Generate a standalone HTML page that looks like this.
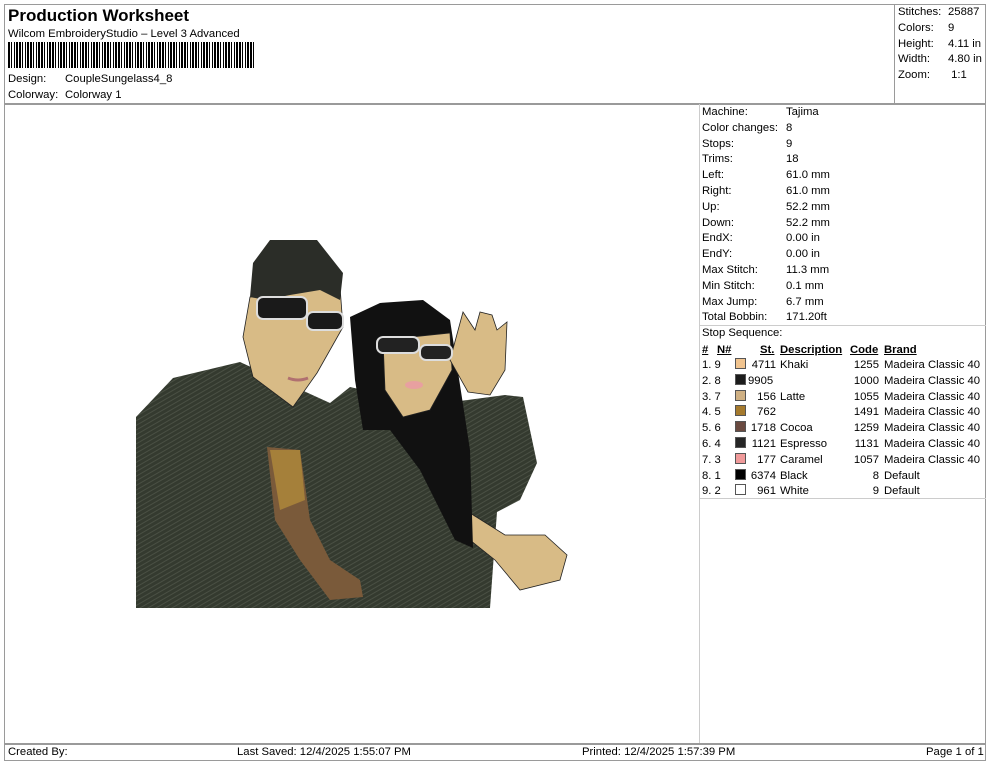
<!DOCTYPE html>
<html><head><meta charset="utf-8"><style>
body{margin:0;width:990px;height:762px;background:#fff;font-family:"Liberation Sans",Arial,sans-serif;font-size:11.3px;color:#000;position:relative;overflow:hidden}
.a{position:absolute;white-space:nowrap;line-height:13px}
.ln{position:absolute;background:#9a9a9a}
.sw{display:inline-block;width:9px;height:9px;border:1px solid #555;vertical-align:-1px}
</style></head><body>
<div class="ln" style="left:4px;top:4px;width:982px;height:1px"></div>
<div class="ln" style="left:4px;top:4px;width:1px;height:757px"></div>
<div class="ln" style="left:985px;top:4px;width:1px;height:757px"></div>
<div class="ln" style="left:4px;top:103px;width:982px;height:2px"></div>
<div class="ln" style="left:894px;top:4px;width:1px;height:100px"></div>
<div class="ln" style="left:699px;top:104px;width:1px;height:640px;background:#ccc"></div>
<div class="ln" style="left:699px;top:325px;width:287px;height:1px;background:#ccc"></div>
<div class="ln" style="left:699px;top:498px;width:287px;height:1px;background:#ccc"></div>
<div class="ln" style="left:4px;top:743px;width:982px;height:2px"></div>
<div class="ln" style="left:4px;top:760px;width:982px;height:1px"></div>

<div class="a" style="left:8px;top:6px;font-size:17px;font-weight:bold;line-height:20px">Production Worksheet</div>
<div class="a" style="left:8px;top:28px">Wilcom EmbroideryStudio – Level 3 Advanced</div>
<div style="position:absolute;left:8px;top:42px;width:248px;height:26px;background:repeating-linear-gradient(90deg,#000 0 2px,#fff 2px 3px,#000 3px 4px,#fff 4px 6px,#000 6px 7px,#fff 7px 8px,#000 8px 10px,#fff 10px 11px)"></div>
<div class="a" style="left:8px;top:73px">Design:</div><div class="a" style="left:65px;top:73px">CoupleSungelass4_8</div>
<div class="a" style="left:8px;top:89px">Colorway:</div><div class="a" style="left:65px;top:89px">Colorway 1</div>

<div class="a" style="left:898px;top:5px;line-height:15.8px">Stitches:<br>Colors:<br>Height:<br>Width:<br>Zoom:</div>
<div class="a" style="left:948px;top:5px;line-height:15.8px">25887<br>9<br>4.11 in<br>4.80 in<br>&nbsp;1:1</div>

<div class="a" style="left:702px;top:105px;line-height:15.8px">Machine:<br>Color changes:<br>Stops:<br>Trims:<br>Left:<br>Right:<br>Up:<br>Down:<br>EndX:<br>EndY:<br>Max Stitch:<br>Min Stitch:<br>Max Jump:<br>Total Bobbin:<br>Stop Sequence:</div>
<div class="a" style="left:786px;top:105px;line-height:15.8px">Tajima<br>8<br>9<br>18<br>61.0 mm<br>61.0 mm<br>52.2 mm<br>52.2 mm<br>0.00 in<br>0.00 in<br>11.3 mm<br>0.1 mm<br>6.7 mm<br>171.20ft</div>

<div class="a" style="left:702px;top:343px;line-height:15.8px;font-weight:bold;text-decoration:underline">#</div>
<div class="a" style="left:717px;top:343px;line-height:15.8px;font-weight:bold;text-decoration:underline">N#</div>
<div class="a" style="left:760px;top:343px;line-height:15.8px;font-weight:bold;text-decoration:underline">St.</div>
<div class="a" style="left:780px;top:343px;line-height:15.8px;font-weight:bold;text-decoration:underline">Description</div>
<div class="a" style="left:850px;top:343px;line-height:15.8px;font-weight:bold;text-decoration:underline">Code</div>
<div class="a" style="left:884px;top:343px;line-height:15.8px;font-weight:bold;text-decoration:underline">Brand</div>
<div class="a" style="left:702px;top:358px;line-height:15.8px">1. 9<br>2. 8<br>3. 7<br>4. 5<br>5. 6<br>6. 4<br>7. 3<br>8. 1<br>9. 2</div>
<div class="a" style="left:735px;top:358px;line-height:15.8px">
<span class="sw" style="background:#f1c48f"></span><br><span class="sw" style="background:#1c1c1c"></span><br><span class="sw" style="background:#cfb083"></span><br><span class="sw" style="background:#a57a2d"></span><br><span class="sw" style="background:#6a4a40"></span><br><span class="sw" style="background:#262626"></span><br><span class="sw" style="background:#f09a9a"></span><br><span class="sw" style="background:#000"></span><br><span class="sw" style="background:#fff"></span></div>
<div class="a" style="left:748px;top:358px;line-height:15.8px;width:28px;text-align:right">4711<br>9905&nbsp;<br>156<br>762<br>1718<br>1121<br>177<br>6374<br>961</div>
<div class="a" style="left:780px;top:358px;line-height:15.8px">Khaki<br>&nbsp;<br>Latte<br>&nbsp;<br>Cocoa<br>Espresso<br>Caramel<br>Black<br>White</div>
<div class="a" style="left:846px;top:358px;line-height:15.8px;width:33px;text-align:right">1255<br>1000<br>1055<br>1491<br>1259<br>1131<br>1057<br>8<br>9</div>
<div class="a" style="left:884px;top:358px;line-height:15.8px">Madeira Classic 40<br>Madeira Classic 40<br>Madeira Classic 40<br>Madeira Classic 40<br>Madeira Classic 40<br>Madeira Classic 40<br>Madeira Classic 40<br>Default<br>Default</div>

<svg style="position:absolute;left:0;top:0" width="990" height="762">
<defs><pattern id="st" width="4" height="4" patternUnits="userSpaceOnUse" patternTransform="rotate(-30)"><rect width="4" height="4" fill="#343a2f"/><rect width="4" height="1" fill="#4a5044"/></pattern></defs>
<polygon points="136,608 136,417 173,378 240,362 330,403 350,387 430,405 505,395 523,397 537,463 520,500 497,512 490,608" fill="url(#st)"/>
<polygon points="470,513 505,535 545,535 567,555 560,580 520,590 495,560 470,540" fill="#d8bb86" stroke="#222" stroke-width="0.8"/>
<polygon points="350,317 380,303 423,300 450,320 470,450 473,548 455,540 420,470 390,430 363,430 355,380" fill="#111"/>
<polygon points="383,340 450,333 452,370 430,410 403,417 385,390" fill="#d8bb86" stroke="#222" stroke-width="0.8"/>
<polygon points="463,312 475,330 480,312 492,315 497,330 507,322 505,370 490,395 468,392 450,360" fill="#d8bb86" stroke="#222" stroke-width="0.8"/>
<polygon points="250,297 243,337 253,377 293,407 317,373 343,327 340,287" fill="#d8bb86" stroke="#222" stroke-width="0.8"/>
<polygon points="250,297 253,263 270,240 317,240 343,273 340,300 320,290 290,295 265,300" fill="#2b2d28"/>
<polygon points="267,447 300,450 310,520 330,560 360,580 363,597 330,600 300,560 275,520" fill="#7a5a3a"/>
<polygon points="270,450 300,450 305,500 280,510" fill="#a5803a"/>
<rect x="257" y="297" width="50" height="22" rx="6" fill="#1a1a1a" stroke="#ddd" stroke-width="2"/>
<rect x="307" y="312" width="36" height="18" rx="6" fill="#1a1a1a" stroke="#ddd" stroke-width="2"/>
<rect x="377" y="337" width="42" height="16" rx="6" fill="#222" stroke="#ddd" stroke-width="2"/>
<rect x="420" y="345" width="32" height="15" rx="6" fill="#222" stroke="#ddd" stroke-width="2"/>
<path d="M288 378q10 4 20 0" stroke="#b07070" stroke-width="3" fill="none"/>
<ellipse cx="414" cy="385" rx="9" ry="4" fill="#e8a0a0"/>
</svg>

<div class="a" style="left:8px;top:746px">Created By:</div>
<div class="a" style="left:237px;top:746px">Last Saved: 12/4/2025 1:55:07 PM</div>
<div class="a" style="left:582px;top:746px">Printed: 12/4/2025 1:57:39 PM</div>
<div class="a" style="left:926px;top:746px">Page 1 of 1</div>
</body></html>
